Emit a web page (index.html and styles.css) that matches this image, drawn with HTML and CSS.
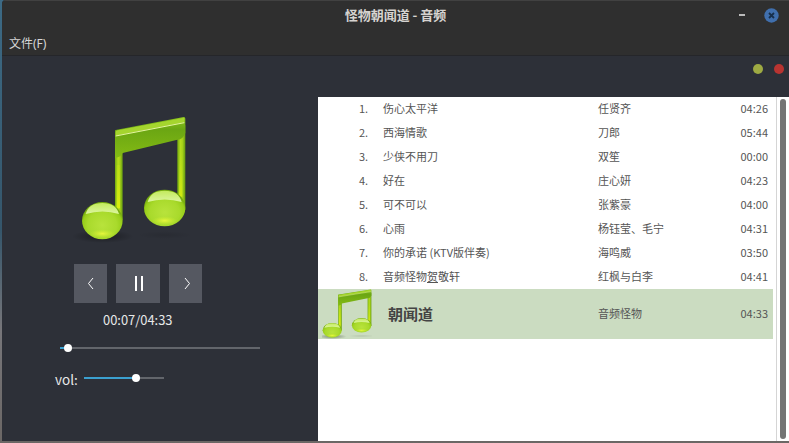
FILE: index.html
```
<!DOCTYPE html>
<html lang="zh-CN">
<head>
<meta charset="utf-8">
<title>怪物朝闻道 - 音频</title>
<link rel="stylesheet" href="styles.css">
</head>
<body>
<svg class="defs" aria-hidden="true">
  <defs>
    <linearGradient id="beam" x1="0" y1="0" x2="0" y2="1">
      <stop offset="0" stop-color="#8cc51c"/><stop offset=".3" stop-color="#6ba613"/><stop offset="1" stop-color="#84bb14"/>
    </linearGradient>
    <linearGradient id="stem" x1="0" y1="0" x2="1" y2="0">
      <stop offset="0" stop-color="#73aa10"/><stop offset=".4" stop-color="#b5dc1c"/><stop offset=".65" stop-color="#a4d018"/><stop offset="1" stop-color="#659b10"/>
    </linearGradient>
    <linearGradient id="stemglow" x1="0" y1="0" x2="0" y2="1">
      <stop offset="0" stop-color="#d8ee10" stop-opacity="0"/><stop offset="1" stop-color="#dff00c" stop-opacity=".9"/>
    </linearGradient>
    <radialGradient id="ball" cx=".5" cy=".62" r=".55">
      <stop offset="0" stop-color="#b8e33c"/><stop offset=".65" stop-color="#a9da2c"/><stop offset=".88" stop-color="#98ce1a"/><stop offset="1" stop-color="#74aa0e"/>
    </radialGradient>
    <linearGradient id="gloss" x1="0" y1="0" x2="0" y2="1">
      <stop offset="0" stop-color="#c3ea5c"/><stop offset="1" stop-color="#dcf5a0"/>
    </linearGradient>
    <radialGradient id="glow"><stop offset="0" stop-color="#e6f73c"/><stop offset="1" stop-color="#d0ee30" stop-opacity="0"/></radialGradient>
    <radialGradient id="shade"><stop offset="0" stop-color="#000" stop-opacity=".4"/><stop offset="1" stop-color="#000" stop-opacity="0"/></radialGradient>
    <g id="note">
      <ellipse cx="98" cy="394" rx="92" ry="20" fill="url(#shade)"/>
      <ellipse cx="284" cy="390" rx="84" ry="12" fill="url(#shade)" opacity=".25"/>
      <path d="M135 75L158 90V345H135Z" fill="url(#stem)"/>
      <path d="M322 80L346 60V315H322Z" fill="url(#stem)"/>
      <path d="M140 180H150V310H140ZM327 140H337V275H327Z" fill="url(#stemglow)"/>
      <path d="M135 78Q136 75 140 74L341 36Q346 36 346 41V84Q338 105 322 104L158 144L151 154L135 160Z" fill="url(#beam)"/>
      <path d="M137 80Q138 77 142 76L343 38V52L137 92Z" fill="#a5d52e"/>
      <path d="M137 93L343 53" stroke="#e6f6a0" stroke-width="3"/>
      <ellipse cx="97" cy="347" rx="61" ry="56" fill="url(#ball)"/>
      <ellipse cx="97" cy="386" rx="38" ry="13" fill="url(#glow)"/>
      <path d="M47 327Q56 294 97 294T147 327Q98 312 47 327Z" fill="url(#gloss)"/>
      <ellipse cx="284" cy="309" rx="62" ry="55" fill="url(#ball)"/>
      <ellipse cx="284" cy="347" rx="38" ry="13" fill="url(#glow)"/>
      <path d="M233 291Q241 257 284 257T335 291Q284 276 233 291Z" fill="url(#gloss)"/>
    </g>
  </defs>
</svg>
<div class="window">
  <header class="titlebar">
    <h1 class="title">怪物朝闻道 - 音频</h1>
    <div class="controls">
      <span class="minimize"></span>
      <svg class="close" viewBox="0 0 15 15"><circle cx="7.5" cy="7.5" r="7.2" fill="#406fad"/><path d="M5 5L10 10M10 5L5 10" stroke="#172f4b" stroke-width="1.8"/></svg>
    </div>
  </header>
  <nav class="menubar">文件<span class="key">(F)</span></nav>
  <main class="main">
    <section class="player">
      <svg class="cover" viewBox="0 0 390 435"><use href="#note"/></svg>
      <div class="buttons">
        <button class="btn"><svg width="33" height="39" viewBox="0 0 33 39"><path d="M19 14L14.500 19.500L19 25" class="arrow"/></svg></button>
        <button class="btn wide"><svg width="44" height="39" viewBox="0 0 44 39"><path d="M19 12H21V27H19ZM25 12H27V27H25Z" fill="#fff"/></svg></button>
        <button class="btn"><svg width="33" height="39" viewBox="0 0 33 39"><path d="M16 14L20.500 19.500L16 25" class="arrow"/></svg></button>
      </div>
      <div class="time">00:07/04:33</div>
      <div class="slider seek"><span class="fill"></span><span class="knob"></span></div>
      <div class="volume"><span class="label">vol:</span><div class="slider level"><span class="fill"></span><span class="knob"></span></div></div>
    </section>
    <section class="side">
      <div class="dots"><span class="dot green"></span><span class="dot red"></span></div>
      <div class="panel">
        <div class="list">
          <div class="row"><span class="num">1.</span><span class="song">伤心太平洋</span><span class="artist">任贤齐</span><span class="length">04:26</span></div>
          <div class="row"><span class="num">2.</span><span class="song">西海情歌</span><span class="artist">刀郎</span><span class="length">05:44</span></div>
          <div class="row"><span class="num">3.</span><span class="song">少侠不用刀</span><span class="artist">双笙</span><span class="length">00:00</span></div>
          <div class="row"><span class="num">4.</span><span class="song">好在</span><span class="artist">庄心妍</span><span class="length">04:23</span></div>
          <div class="row"><span class="num">5.</span><span class="song">可不可以</span><span class="artist">张紫豪</span><span class="length">04:00</span></div>
          <div class="row"><span class="num">6.</span><span class="song">心雨</span><span class="artist">杨钰莹、毛宁</span><span class="length">04:31</span></div>
          <div class="row"><span class="num">7.</span><span class="song">你的承诺 (KTV版伴奏)</span><span class="artist">海鸣威</span><span class="length">03:50</span></div>
          <div class="row"><span class="num">8.</span><span class="song">音频怪物<u>贺</u>敬轩</span><span class="artist">红枫与白李</span><span class="length">04:41</span></div>
          <div class="row current"><svg class="thumb" viewBox="32 33 318 380" preserveAspectRatio="none"><use href="#note"/></svg><span class="song">朝闻道</span><span class="artist">音频怪物</span><span class="length">04:33</span></div>
        </div>
        <div class="scroll"><span class="thumbbar"></span></div>
      </div>
    </section>
  </main>
</div>
</body>
</html>
```
FILE: styles.css
```
* { box-sizing: border-box; }
body {
  margin: 0;
  width: 789px;
  height: 443px;
  padding: 0 0 2px 2px;
  overflow: hidden;
  background: linear-gradient(#3c6a85 0, #35566b 230px, #77767a 330px, #6b6765 100%);
  font-family: "Noto Sans CJK SC", sans-serif;
}
.defs { position: absolute; width: 0; height: 0; }
.window {
  height: 441px;
  display: flex;
  flex-direction: column;
  background: #2d3038;
  border-radius: 4px 0 0 0;
  overflow: hidden;
}
.titlebar {
  height: 32px;
  flex: none;
  display: grid;
  grid-template-columns: 1fr auto 1fr;
  align-items: center;
  padding-bottom: 3px;
  background: #2f2f2f;
  border-top: 1px solid #414141;
}
.title {
  grid-column: 2;
  margin: 0;
  font-size: 13px;
  line-height: 20px;
  font-weight: 700;
  color: #d6d3d0;
}
.controls { display: flex; justify-content: flex-end; align-items: center; gap: 19px; padding-right: 10px; }
.minimize { width: 6px; height: 2px; background: #bbb; }
.close { width: 15px; height: 15px; }
.menubar {
  height: 24px;
  flex: none;
  padding-left: 7px;
  background: #2f2f2f;
  border-bottom: 1px solid #25262a;
  color: #d6d6d6;
  font-size: 12px;
  line-height: 21px;
}
.key { font-family: "Noto Sans", sans-serif; }
.main { flex: 1; display: flex; min-height: 0; }
.player { width: 316px; flex: none; padding-top: 49px; color: #e8e8e8; }
.cover { display: block; width: 130px; height: 145px; margin-left: 68px; }
.buttons { display: flex; gap: 9px; margin: 14px 0 0 72px; }
.btn { width: 33px; height: 39px; padding: 0; border: 0; background: #555861; }
.btn.wide { width: 44px; }
.btn svg { display: block; }
.arrow { fill: none; stroke: #fff; stroke-width: 1; }
.time { margin: 7px 0 0 101px; font-size: 12.9px; line-height: 20px; }
.slider { position: relative; height: 2px; background: #62656b; }
.fill { display: block; height: 2px; background: #3ba0d0; }
.knob { position: absolute; top: -3px; width: 8px; height: 8px; border-radius: 50%; background: #fff; }
.seek { width: 200px; margin: 17px 0 0 58px; }
.seek .fill { width: 8px; }
.seek .knob { left: 4px; }
.volume { display: flex; align-items: center; gap: 6px; margin: 19px 0 0 53px; height: 20px; }
.label { width: 23px; font-size: 13.5px; line-height: 20px; padding-top: 2px; white-space: nowrap; }
.level { width: 80px; }
.level .fill { width: 52px; }
.level .knob { left: 48px; }
.side { flex: 1; display: flex; flex-direction: column; min-width: 0; }
.dots { height: 41px; flex: none; display: flex; justify-content: flex-end; gap: 11px; padding: 8px 5px 0 0; }
.dot { width: 10px; height: 10px; border-radius: 50%; }
.green { background: #9eaa43; }
.red { background: #b93431; }
.panel { flex: 1; display: flex; background: #fff; }
.list { width: 455px; color: #555; font-size: 11px; }
.row {
  height: 24px;
  display: grid;
  grid-template-columns: 65px 215px 1fr auto;
  align-items: center;
  padding-right: 5px;
  line-height: 22px;
}
.row span { padding-bottom: 2px; }
.num { padding-left: 41px; }
u { text-underline-offset: 1px; }
.current { height: 50px; background: #cbdcc1; }
.current .song { padding-left: 5px; padding-bottom: 0; font-size: 15px; font-weight: 700; color: #444; }
.thumb { width: 50px; height: 50px; margin-left: 4px; }
.scroll { width: 13px; margin-left: 3px; padding: 2px 0 2px 3px; border-left: 1px solid #d5d5d5; }
.thumbbar { display: block; width: 6px; height: 100%; border-radius: 3px; background: #747474; }
```
